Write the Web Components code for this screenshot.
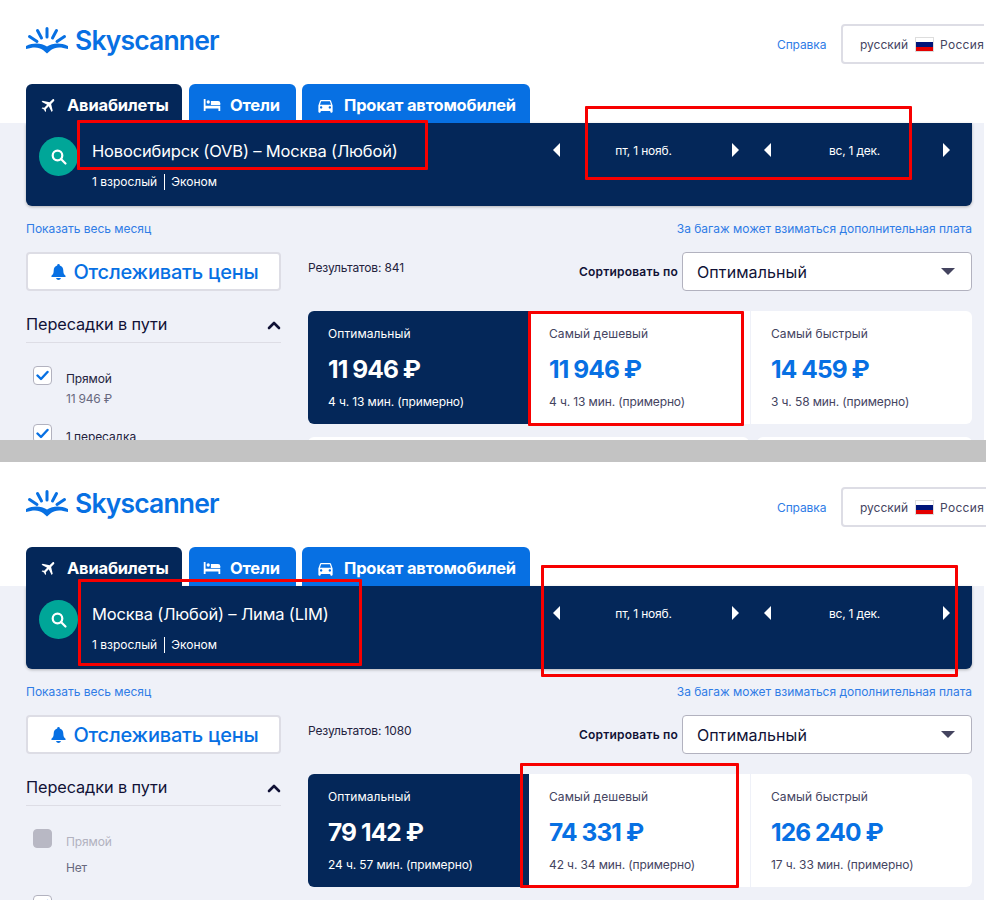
<!DOCTYPE html>
<html lang="ru">
<head>
<meta charset="utf-8">
<title>Skyscanner</title>
<style>
  html, body { margin: 0; padding: 0; background: #fff; }
  body { font-family: Inter, "Noto Sans", sans-serif; color: #111236; width: 986px; height: 900px; overflow: hidden; }
  .gap { height: 22px; background: #c3c3c3; }
</style>
</head>
<body>
<sky-panel id="first" width="984" height="440" top="0" route="Новосибирск (OVB) – Москва (Любой)" results="841">
  <stop-option slot="stops" label="Прямой" note="11 946 ₽" checked></stop-option>
  <stop-option slot="stops" label="1 пересадка" checked></stop-option>
  <price-card slot="cards" dark label="Оптимальный" price="11 946 ₽" time="4 ч. 13 мин. (примерно)"></price-card>
  <price-card slot="cards" label="Самый дешевый" price="11 946 ₽" time="4 ч. 13 мин. (примерно)"></price-card>
  <price-card slot="cards" label="Самый быстрый" price="14 459 ₽" time="3 ч. 58 мин. (примерно)"></price-card>
  <red-box slot="marks" box="77,120,351,50"></red-box>
  <red-box slot="marks" box="585,106,327,74"></red-box>
  <red-box slot="marks" box="528,311,216,115"></red-box>
</sky-panel>
<div class="gap"></div>
<sky-panel id="second" width="986" height="438" top="1" route="Москва (Любой) – Лима (LIM)" results="1080">
  <stop-option slot="stops" label="Прямой" note="Нет" disabled></stop-option>
  <stop-option slot="stops" label="1 пересадка" checked></stop-option>
  <price-card slot="cards" dark label="Оптимальный" price="79 142 ₽" time="24 ч. 57 мин. (примерно)"></price-card>
  <price-card slot="cards" label="Самый дешевый" price="74 331 ₽" time="42 ч. 34 мин. (примерно)"></price-card>
  <price-card slot="cards" label="Самый быстрый" price="126 240 ₽" time="17 ч. 33 мин. (примерно)"></price-card>
  <red-box slot="marks" box="78,117,284,87"></red-box>
  <red-box slot="marks" box="541,103,417,112"></red-box>
  <red-box slot="marks" box="520,301,219,125"></red-box>
</sky-panel>

<script>
const ICONS = {
  plane: '<svg width="18" height="18" viewBox="0 0 24 24" fill="#fff"><path transform="rotate(45 12 12)" d="M21 16v-2l-8-5V3.5c0-.83-.67-1.5-1.5-1.5S10 2.67 10 3.5V9l-8 5v2l8-2.5V19l-2 1.5V22l3.5-1 3.5 1v-1.5L13 19v-5.5l8 2.5z"/></svg>',
  bed: '<svg width="18" height="18" viewBox="0 0 24 24" fill="#fff"><path d="M1 4h2.4v9H23v7h-2.4v-3.2H3.4V20H1z"/><circle cx="7" cy="8" r="2.2"/><path d="M10.5 6.5H20a3 3 0 0 1 3 3V12H10.500z"/></svg>',
  car: '<svg width="19" height="19" viewBox="0 0 24 24" fill="#fff"><path d="M18.92 6.01C18.72 5.42 18.16 5 17.5 5h-11c-.66 0-1.21.42-1.42 1.01L3 12v8c0 .55.45 1 1 1h1c.55 0 1-.45 1-1v-1h12v1c0 .55.45 1 1 1h1c.55 0 1-.45 1-1v-8l-2.08-5.990zM6.500 16c-.83 0-1.500-.67-1.500-1.500S5.670 13 6.500 13s1.500.67 1.500 1.500S7.330 16 6.500 16zm11 0c-.83 0-1.500-.67-1.500-1.500s.67-1.500 1.500-1.500 1.500.67 1.500 1.500-.67 1.500-1.500 1.500zM5 11l1.500-4.500h11L19 11H5z"/></svg>'
};

class SkyLogo extends HTMLElement {
  constructor() {
    super();
    this.attachShadow({mode: 'open'}).innerHTML = `
      <style>
        :host { display: flex; align-items: center; gap: 7px; height: 30px; }
        span { font: 600 26.500px Inter, sans-serif; color: #0770e3; letter-spacing: -0.85px; line-height: 30px; }
        svg { display: block; }
      </style>
      <svg width="42" height="27" viewBox="0 0 42 27" fill="none" stroke="#0770e3" stroke-width="3" stroke-linecap="round">
        <path d="M21 1.500v8.500M11.500 3.500l4 7.500M30.500 3.500l-4 7.500M3.500 9.500l7.500 5M38.500 9.500l-7.500 5"/>
        <path stroke="none" fill="#0770e3" d="M0 19C8 15.500 15 16 21 19.500 27 16 34 15.500 42 19L42 22C34 19.500 29 20 25 23L21 26.500 17 23C13 20 8 19.500 0 22z"/>
      </svg>
      <span>Skyscanner</span>`;
  }
}
customElements.define('sky-logo', SkyLogo);

class SkyTab extends HTMLElement {
  constructor() {
    super();
    this.attachShadow({mode: 'open'}).innerHTML = `
      <style>
        :host { display: flex; align-items: center; gap: 9px; height: 39px; box-sizing: border-box; padding: 3px 14px 0 14px;
                background: #0770e3; color: #fff; border-radius: 6px 6px 0 0; font: 700 16.500px Inter, sans-serif; letter-spacing: -0.2px; white-space: nowrap; }
        :host([active]) { background: #042759; }
        svg { display: block; }
      </style>
      <span id="icon"></span><slot></slot>`;
    this.shadowRoot.getElementById('icon').innerHTML = ICONS[this.getAttribute('icon')] || '';
    this.shadowRoot.getElementById('icon').style.display = 'block';
  }
}
customElements.define('sky-tab', SkyTab);

class DateStepper extends HTMLElement {
  constructor() {
    super();
    this.attachShadow({mode: 'open'}).innerHTML = `
      <style>
        :host { display: flex; align-items: center; justify-content: space-between; width: 186px; height: 14px;
                color: #fff; font: 400 12px Inter, sans-serif; letter-spacing: -0.2px; }
        i { width: 0; height: 0; border-top: 7.500px solid transparent; border-bottom: 7.500px solid transparent; }
        .l { border-right: 7px solid #fff; }
        .r { border-left: 7px solid #fff; }
        span { margin-right: 5px; }
      </style>
      <i class="l"></i><span><slot></slot></span><i class="r"></i>`;
  }
}
customElements.define('date-stepper', DateStepper);

class SearchBar extends HTMLElement {
  constructor() {
    super();
    this.attachShadow({mode: 'open'}).innerHTML = `
      <style>
        :host { display: flex; height: 83px; box-sizing: border-box; padding: 0 22px 0 13px; background: #042759; color: #fff;
                border-radius: 0 0 6px 6px; box-shadow: 0 1px 3px rgba(37,32,31,.3); }
        .go { flex: none; width: 39px; height: 39px; margin-top: 14px; border-radius: 50%; background: #00a698;
              display: flex; align-items: center; justify-content: center; }
        .info { flex: 1; padding: 17px 0 0 14px; }
        .route { font: 400 16.500px/22px Inter, sans-serif; letter-spacing: -0.16px; }
        .meta { margin-top: 12px; display: flex; align-items: center; font: 400 12px/16px Inter, sans-serif; letter-spacing: 0; }
        .meta b { font-weight: 400; }
        .meta b + b { margin-left: 7px; padding-left: 6px; border-left: 1px solid #fff; }
        .dates { display: flex; gap: 25px; padding-top: 20px; }
      </style>
      <div class="go"><svg width="18" height="18" viewBox="0 0 18 18" fill="none" stroke="#fff" stroke-width="2.200" stroke-linecap="round"><circle cx="7.500" cy="7.500" r="4.800"/><path d="M11 11l4.500 4.500"/></svg></div>
      <div class="info">
        <div class="route"><slot></slot></div>
        <div class="meta"><b>1 взрослый</b><b>Эконом</b></div>
      </div>
      <div class="dates"><date-stepper>пт, 1 нояб.</date-stepper><date-stepper>вс, 1 дек.</date-stepper></div>`;
  }
}
customElements.define('search-bar', SearchBar);

class StopOption extends HTMLElement {
  constructor() {
    super();
    this.attachShadow({mode: 'open'}).innerHTML = `
      <style>
        :host { display: flex; padding-left: 7px; gap: 14px; min-height: 58px; font: 400 12px Inter, sans-serif; }
        :host([disabled]) { min-height: 66px; }
        .box { flex: none; width: 19px; height: 19px; box-sizing: border-box; border: 1px solid #b2b2bf; border-radius: 4px; background: #fff;
               display: flex; align-items: center; justify-content: center; }
        :host([disabled]) .box { background: #b8b8c4; border-color: #b8b8c4; }
        .label { margin-top: 5px; line-height: 15px; color: #24233e; letter-spacing: -0.1px; }
        :host([disabled]) .label { color: #b2b2bf; }
        .note { margin-top: 5px; line-height: 15px; color: #68697f; letter-spacing: -0.2px; }
        :host([disabled]) .note { margin-top: 11px; }
      </style>
      <div class="box">${this.hasAttribute('checked') ? '<svg width="13" height="11" viewBox="0 0 13 11" fill="none" stroke="#0770e3" stroke-width="2.400" stroke-linecap="round" stroke-linejoin="round"><path d="M1.500 5.500l3.500 3.500 6.500-7"/></svg>' : ''}</div>
      <div>
        <div class="label">${this.getAttribute('label')}</div>
        ${this.getAttribute('note') ? `<div class="note">${this.getAttribute('note')}</div>` : ''}
      </div>`;
  }
}
customElements.define('stop-option', StopOption);

class PriceCard extends HTMLElement {
  constructor() {
    super();
    this.attachShadow({mode: 'open'}).innerHTML = `
      <style>
        :host { display: block; flex: 1; box-sizing: border-box; height: 113px; padding: 15px 20px 0 20px; background: #fff; color: #44445f;
                font: 400 12px Inter, sans-serif; letter-spacing: -0.12px; }
        :host([dark]) { background: #042759; color: #fff; border-radius: 6px 0 0 6px; }
        :host(:last-of-type) { border-radius: 0 6px 6px 0; border-left: 1px solid #eff1f8; }
        .label { line-height: 15px; letter-spacing: 0.08px; }
        .price { margin-top: 13px; font: 700 24.500px/30px Inter, sans-serif; color: #0770e3; letter-spacing: -0.9px; white-space: nowrap; }
        :host([dark]) .price { color: #fff; }
        .time { margin-top: 10px; line-height: 15px; white-space: nowrap; }
      </style>
      <div class="label">${this.getAttribute('label')}</div>
      <div class="price">${this.getAttribute('price')}</div>
      <div class="time">${this.getAttribute('time')}</div>`;
  }
}
customElements.define('price-card', PriceCard);

class RedBox extends HTMLElement {
  constructor() {
    super();
    const [x, y, w, h] = this.getAttribute('box').split(',');
    this.attachShadow({mode: 'open'}).innerHTML = `
      <style>
        :host { display: block; position: absolute; left: ${x}px; top: ${y}px; width: ${w}px; height: ${h}px;
                box-sizing: border-box; border: 3px solid #f70000; border-radius: 1px; pointer-events: none; }
      </style>`;
  }
}
customElements.define('red-box', RedBox);

class SkyPanel extends HTMLElement {
  constructor() {
    super();
    const width = this.getAttribute('width');
    const height = this.getAttribute('height');
    const top = this.getAttribute('top');
    this.attachShadow({mode: 'open'}).innerHTML = `
      <style>
        :host { display: block; position: relative; overflow: hidden; width: ${width}px; height: ${height}px; background: #fff; }
        a { color: #2f7ce6; text-decoration: none; }
        .head { display: flex; align-items: flex-start; justify-content: space-between; height: ${84 + +top}px; box-sizing: border-box;
                padding: ${25 + +top}px 0 0 26px; }
        .tools { display: flex; align-items: center; width: 209px; margin-top: -1px; margin-right: ${+width - 986 < 0 ? -2 : 0}px; flex: none; font: 400 12px Inter, sans-serif; }
        .tools a { width: 64px; flex: none; letter-spacing: -0.1px; }
        .locale { flex: none; box-sizing: border-box; width: 150px; height: 40px; border: 2px solid #dddde5; border-radius: 4px; padding-left: 17px;
                  display: flex; align-items: center; gap: 7px; color: #44445f; white-space: nowrap; letter-spacing: 0; }
        .locale .country { margin-left: -1px; letter-spacing: 0.3px; }
        .flag { flex: none; width: 19px; height: 15px; background: linear-gradient(#fff 33%, #00157a 33% 66%, #e40000 66%); box-sizing: border-box; border: 1px solid #ddd; }
        .tabs { display: flex; gap: 7px; padding-left: 26px; position: relative; height: 39px; }
        .tabs sky-tab:nth-child(1) { width: 156px; box-sizing: border-box; }
        .tabs sky-tab:nth-child(2) { width: 107px; box-sizing: border-box; }
        .tabs sky-tab:nth-child(3) { width: 228px; margin-left: -1px; box-sizing: border-box; }
        .page { background: #eff1f8; height: 400px; padding: 0 12px 0 26px; width: 946px; }
        .links { display: flex; justify-content: space-between; padding-top: 15px; height: 46px; box-sizing: border-box; font: 400 12px/15px Inter, sans-serif; letter-spacing: -0.02px; }
        .cols { display: grid; grid-template-columns: 255px 664px; column-gap: 27px; }
        .track { display: flex; align-items: center; justify-content: center; gap: 7px; box-sizing: border-box; height: 39px; padding-left: 3px; background: #fff; border: 2px solid #dddde5;
                 border-radius: 4px; color: #0770e3; font: 500 20px Inter, sans-serif; letter-spacing: -0.2px; white-space: nowrap; }
        .filter-head { display: flex; justify-content: space-between; align-items: center; margin-top: 20px; height: 28px; padding-bottom: 3px; box-sizing: content-box;
                       border-bottom: 1px solid #dddde5; font: 400 16.300px Inter, sans-serif; letter-spacing: -0.1px; color: #111236; }
        .filter-head span { position: relative; top: -1px; }
        .stops { padding-top: 23px; height: 100px; }
        .top { display: flex; justify-content: space-between; height: 59px; align-items: flex-start; }
        .count { font: 400 12px/15px Inter, sans-serif; letter-spacing: -0.15px; color: #24233e; padding-top: 8px; }
        .sort { display: flex; align-items: center; gap: 4px; font: 600 12px Inter, sans-serif; letter-spacing: 0.2px; }
        .select { display: flex; align-items: center; justify-content: space-between; box-sizing: border-box; width: 290px; height: 39px; padding: 0 16px 0 14px; background: #fff;
                  border: 1px solid #b2b2bf; border-radius: 4px; font: 400 16px Inter, sans-serif; color: #111236; letter-spacing: 0.1px; }
        .select i { width: 0; height: 0; border: 7.500px solid transparent; border-top: 7.500px solid #44445f; border-bottom: 0; }
        .cards { display: flex; border-radius: 6px; }
        .more { display: flex; gap: 8px; margin-top: 13px; height: 20px; }
        .more div { background: #fff; border-radius: 6px 6px 0 0; }
        .more div:first-child { flex: 441; }
        .more div:last-child { flex: 215; }
      </style>
      <div class="head">
        <sky-logo></sky-logo>
        <div class="tools">
          <a href="#">Справка</a>
          <div class="locale">русский <span class="flag"></span><span class="country">Россия</span></div>
        </div>
      </div>
      <div class="tabs">
        <sky-tab icon="plane" active>Авиабилеты</sky-tab>
        <sky-tab icon="bed">Отели</sky-tab>
        <sky-tab icon="car">Прокат автомобилей</sky-tab>
      </div>
      <div class="page">
        <search-bar>${this.getAttribute('route')}</search-bar>
        <div class="links"><a href="#">Показать весь месяц</a><a href="#">За багаж может взиматься дополнительная плата</a></div>
        <div class="cols">
          <div>
            <div class="track">
              <svg width="15" height="16" viewBox="0 0 15 16" fill="#0770e3"><path d="M7.500 0a1.300 1.300 0 0 1 1.300 1.400C11 2 12.300 4 12.300 6.400c0 2.600.7 4 2.200 5.400.4.500.2 1.200-.5 1.200H.99c-.7 0-.9-.7-.5-1.200C2 10.400 2.700 9 2.700 6.400 2.700 4 4 2 6.200 1.400A1.300 1.300 0 0 1 7.500 0zM5 14h5c-.4 1.200-1.400 2-2.500 2S5.400 15.200 5 14z"/></svg>
              Отслеживать цены
            </div>
            <div class="filter-head"><span>Пересадки в пути</span>
              <svg width="14" height="9" viewBox="0 0 14 9" fill="none" stroke="#111236" stroke-width="2.600" stroke-linecap="round" stroke-linejoin="round"><path d="M2 7l5-5 5 5"/></svg>
            </div>
            <div class="stops"><slot name="stops"></slot></div>
          </div>
          <div>
            <div class="top">
              <div class="count">Результатов: ${this.getAttribute('results')}</div>
              <div class="sort">Сортировать по
                <div class="select">Оптимальный<i></i></div>
              </div>
            </div>
            <div class="cards"><slot name="cards"></slot></div>
            <div class="more"><div></div><div></div></div>
          </div>
        </div>
      </div>
      <slot name="marks"></slot>`;
  }
}
customElements.define('sky-panel', SkyPanel);
</script>
</body>
</html>
